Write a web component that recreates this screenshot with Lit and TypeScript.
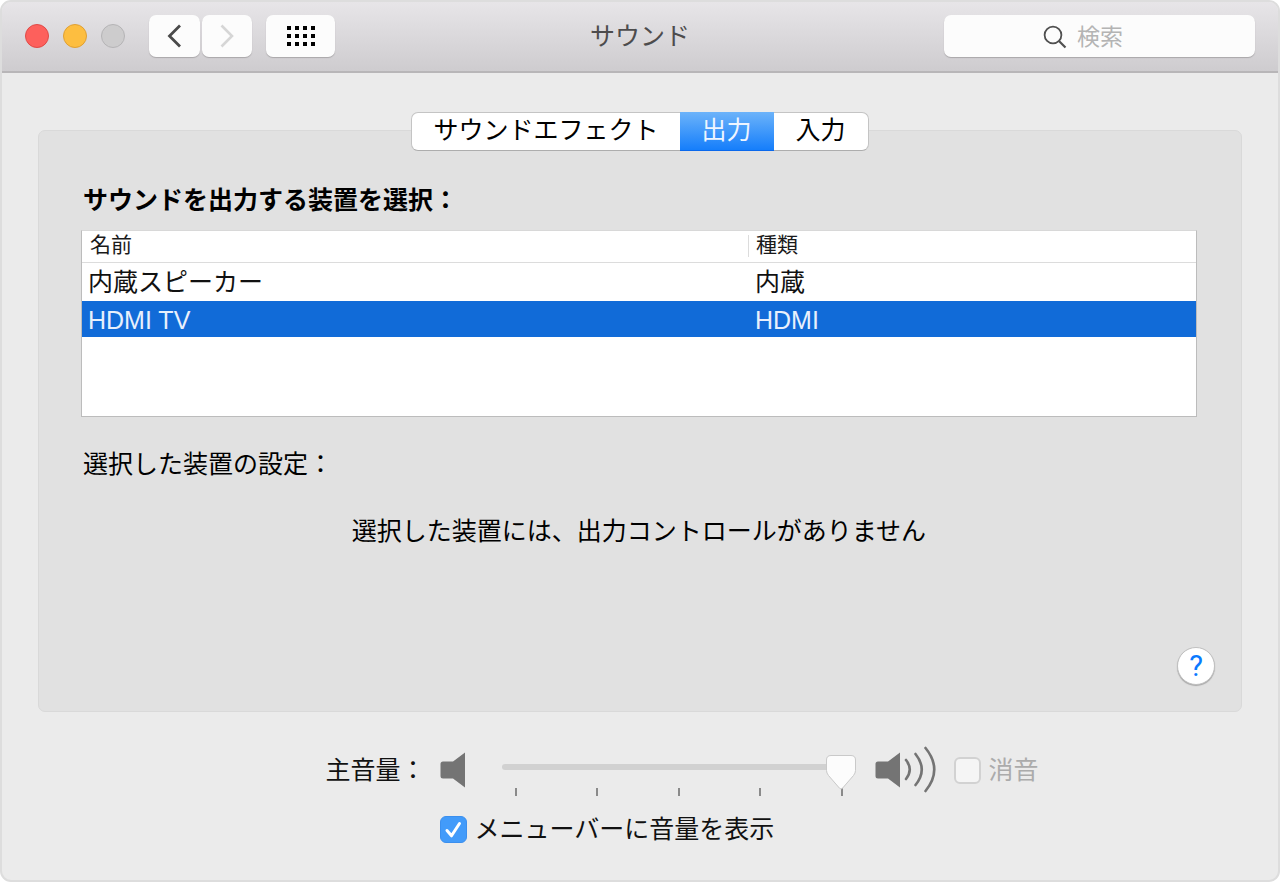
import { LitElement, html, css, svg } from "lit";
import { customElement, property, state } from "lit/decorators.js";
import { classMap } from "lit/directives/class-map.js";

const base = css`
  * {
    box-sizing: border-box;
  }
  button,
  input {
    font: inherit;
    color: inherit;
    margin: 0;
    padding: 0;
    border: 0;
    background: none;
  }
  svg {
    display: block;
    flex: none;
  }
`;

@customElement("window-toolbar")
class WindowToolbar extends LitElement {
  @property() heading = "";

  static styles = [
    base,
    css`
      :host {
        display: grid;
        grid-template-columns: 1fr auto 1fr;
        align-items: center;
        padding: 13px 23px 14px;
        border-bottom: 2px solid #b8b6b8;
        background: linear-gradient(#e7e5e8, #cecccf);
      }
      .left {
        display: flex;
        align-items: center;
      }
      .lights {
        display: flex;
        gap: 14px;
        margin-right: 24px;
      }
      .light {
        width: 24px;
        height: 24px;
        border-radius: 50%;
        border: 1px solid #b5b4b6;
        background: #cdcccd;
      }
      .close {
        background: #fd605c;
        border-color: #df4a47;
      }
      .minimize {
        background: #fdbe40;
        border-color: #dfa034;
      }
      .nav {
        display: flex;
        gap: 2px;
        margin-right: 14px;
      }
      .tool {
        display: flex;
        align-items: center;
        justify-content: center;
        width: 50px;
        height: 42px;
        border-radius: 7px;
        background: #fcfcfc;
        box-shadow: 0 1px 1px #a9a7a9;
      }
      .back {
        width: 51px;
      }
      .all {
        width: 69px;
      }
      .title {
        margin: 0;
        font-size: 25px;
        line-height: 36px;
        font-weight: 400;
        color: #4d4c4d;
      }
      .search {
        justify-self: end;
        display: flex;
        align-items: center;
        gap: 10px;
        width: 311px;
        height: 42px;
        padding: 2px 0 0 99px;
        border-radius: 7px;
        background: #fcfcfc;
        box-shadow: 0 1px 1px #a9a7a9;
      }
      .field {
        flex: 1;
        min-width: 0;
        height: 40px;
        font-size: 23px;
        color: #222;
        outline: none;
      }
      .field::placeholder {
        color: #b4b4b4;
        opacity: 1;
      }
    `,
  ];

  render() {
    const dots = [0, 1, 2].flatMap((r) =>
      [0, 1, 2, 3].map((c) => svg`<rect x=${c * 8} y=${r * 8} width="4" height="4"></rect>`)
    );
    return html`
      <div class="left">
        <div class="lights">
          <button class="light close" aria-label="閉じる"></button>
          <button class="light minimize" aria-label="しまう"></button>
          <button class="light" aria-label="拡大" disabled></button>
        </div>
        <div class="nav">
          <button class="tool back" aria-label="戻る">
            <svg width="16" height="24" viewBox="0 0 16 24" fill="none" stroke="#4a4a4a" stroke-width="2.8">
              <path d="M13 1.5 L2.500 12 L13 22.5"></path>
            </svg>
          </button>
          <button class="tool" aria-label="進む" disabled>
            <svg width="16" height="24" viewBox="0 0 16 24" fill="none" stroke="#d6d6d6" stroke-width="2.600">
              <path d="M2.5 1.5 L13 12 L2.5 22.5"></path>
            </svg>
          </button>
        </div>
        <button class="tool all" aria-label="すべてを表示">
          <svg width="28" height="20" viewBox="0 0 28 20" fill="#000">${dots}</svg>
        </button>
      </div>
      <h1 class="title">${this.heading}</h1>
      <label class="search">
        <svg width="24" height="24" viewBox="0 0 24 24" fill="none" stroke="#505050" stroke-width="1.8">
          <circle cx="10" cy="10" r="8.4"></circle>
          <path d="M16 16 L22.5 22.5" stroke-width="2.2"></path>
        </svg>
        <input class="field" type="text" placeholder="検索" aria-label="検索" />
      </label>
    `;
  }
}

interface Device {
  name: string;
  kind: string;
}

@customElement("device-table")
class DeviceTable extends LitElement {
  @property({ attribute: false }) devices: Device[] = [];
  @state() selected = 1;

  static styles = [
    base,
    css`
      :host {
        display: block;
        min-height: 187px;
        background: #fff;
        border: 1px solid #bcbcbc;
        border-top-color: #d8d8d8;
      }
      table {
        width: 100%;
        table-layout: fixed;
        border-spacing: 0;
      }
      .kind {
        width: 448px;
      }
      th,
      td {
        text-align: left;
        font-weight: 400;
        white-space: nowrap;
      }
      th {
        height: 32px;
        padding: 0 8px 3px;
        font-size: 21px;
        line-height: 28px;
        color: #1a1a1a;
        border-bottom: 1px solid #dcdcdc;
      }
      .divided {
        background: linear-gradient(#dcdcdc, #dcdcdc) 0 4px / 1px 22px no-repeat;
      }
      td {
        height: 38px;
        padding: 0 6px;
        font-size: 25px;
        line-height: 34px;
        color: #111;
      }
      td.second {
        padding-left: 7px;
      }
      .selected td {
        height: 36px;
        padding-top: 2px;
        background: #116bd8;
        color: #e8f0fc;
      }
    `,
  ];

  render() {
    return html`
      <table>
        <colgroup>
          <col />
          <col class="kind" />
        </colgroup>
        <thead>
          <tr>
            <th scope="col">名前</th>
            <th scope="col" class="divided">種類</th>
          </tr>
        </thead>
        <tbody>
          ${this.devices.map(
            (d, i) => html`<tr
              class=${classMap({ selected: i === this.selected })}
              @click=${() => (this.selected = i)}
            >
              <td>${d.name}</td>
              <td class="second">${d.kind}</td>
            </tr>`
          )}
        </tbody>
      </table>
    `;
  }
}

@customElement("volume-controls")
class VolumeControls extends LitElement {
  static styles = [
    base,
    css`
      :host {
        display: grid;
        grid-template-columns: auto auto;
        justify-content: center;
        column-gap: 14px;
        row-gap: 15px;
        padding-left: 84px;
        font-size: 25px;
        line-height: 36px;
        color: #111;
        white-space: nowrap;
      }
      .row {
        display: flex;
        align-items: center;
      }
      .caption {
        align-self: center;
      }
      .low {
        margin-right: 36px;
      }
      .high {
        margin: 0 17px 0 19px;
      }
      .slider {
        display: grid;
        width: 354px;
        height: 52px;
        padding-top: 5px;
      }
      .range {
        grid-area: 1 / 1;
        appearance: none;
        width: 100%;
        height: 36px;
        z-index: 1;
      }
      .range::-webkit-slider-runnable-track {
        height: 6px;
        border-radius: 3px;
        background: #d1d1d1;
      }
      .range::-webkit-slider-thumb {
        appearance: none;
        width: 30px;
        height: 36px;
        margin-top: -9px;
        background: url("data:image/svg+xml,%3Csvg xmlns='http://www.w3.org/2000/svg' width='30' height='36'%3E%3Cpath d='M5 .5H25Q29.5 .5 29.5 5V15.500Q29.500 18 27.500 20.500L16.500 33.200Q15 34.800 13.500 33.200L2.500 20.500Q.5 18 .5 15.500V5Q.5 .5 5 .5Z' fill='%23fcfcfc' stroke='%23c9c9c9'/%3E%3C/svg%3E");
      }
      .ticks {
        grid-area: 1 / 1;
        align-self: end;
        display: flex;
        justify-content: space-between;
        padding: 0 13px;
      }
      .tick {
        width: 2px;
        height: 8px;
        background: #8a8a8a;
      }
      .check {
        display: flex;
        align-items: center;
        gap: 8px;
      }
      .box {
        appearance: none;
        width: 27px;
        height: 27px;
        border: 2px solid #d2d2d2;
        border-radius: 6px;
        background: #f5f5f5;
      }
      .box:checked {
        border: 1px solid #3b8fee;
        background: #429bfa
          url("data:image/svg+xml,%3Csvg xmlns='http://www.w3.org/2000/svg' width='25' height='25' fill='none' stroke='white' stroke-width='3' stroke-linecap='round' stroke-linejoin='round'%3E%3Cpath d='M6 13.500L10.500 18.800L18.500 6.500'/%3E%3C/svg%3E")
          center no-repeat;
      }
      .muted {
        color: #ababab;
      }
      .menubar {
        grid-column: 2;
      }
    `,
  ];

  speaker() {
    return svg`<path d="M3 9.500 H13 L25 0.500 V35.500 L13 26.500 H3 Q0.500 26.500 0.500 24 V12 Q0.500 9.500 3 9.500 Z" fill="#747474"></path>`;
  }

  render() {
    return html`
      <label class="caption" for="volume">主音量：</label>
      <div class="row">
        <svg class="low" width="26" height="36" viewBox="0 0 26 36">${this.speaker()}</svg>
        <div class="slider">
          <input id="volume" class="range" type="range" min="0" max="4" step="any" value="4" />
          <div class="ticks">${[0, 1, 2, 3, 4].map(() => html`<span class="tick"></span>`)}</div>
        </div>
        <svg class="high" width="62" height="48" viewBox="0 0 62 48">
          <g transform="translate(0 6)">${this.speaker()}</g>
          <g fill="none" stroke="#747474" stroke-width="2.600" stroke-linecap="round">
            <path d="M31 14 Q38.500 23.500 31 33"></path>
            <path d="M40.500 8 Q53 23.500 40.500 39"></path>
            <path d="M50.500 2 Q68 23.500 50.500 45"></path>
          </g>
        </svg>
        <label class="check muted"><input class="box" type="checkbox" disabled />消音</label>
      </div>
      <label class="check menubar"><input class="box" type="checkbox" checked />メニューバーに音量を表示</label>
    `;
  }
}

@customElement("app-root")
class AppRoot extends LitElement {
  @state() tab = 1;

  static styles = [
    base,
    css`
      :host {
        display: flex;
        flex-direction: column;
        min-height: 100vh;
        box-sizing: border-box;
        border: 2px solid #dddddd;
        border-radius: 11px;
        background: #ebebeb;
        overflow: hidden;
        font-family: "Liberation Sans", "Noto Sans CJK JP", sans-serif;
        font-size: 25px;
        line-height: 36px;
        color: #000;
      }
      .main {
        display: flex;
        flex-direction: column;
        padding: 39px 36px 31px;
      }
      .tabs {
        align-self: center;
        display: flex;
        height: 39px;
        border: 1px solid #c4c4c4;
        border-bottom-color: #adadad;
        border-radius: 7px;
        background: #fff;
        z-index: 1;
      }
      .tab {
        min-width: 94px;
        padding: 0 21px 3px;
        line-height: 34px;
      }
      .tab.on {
        margin: -1px 0;
        color: #eef5ff;
        background: linear-gradient(#6cb3fa, #157efb);
        border-bottom: 1px solid #0a68ec;
      }
      .panel {
        display: flex;
        flex-direction: column;
        margin: -21px 0 32px;
        padding: 51px 44px 26px 42px;
        border: 1px solid #d9d9d9;
        border-radius: 7px;
        background: #e1e1e1;
      }
      .heading {
        margin: 0 0 12px;
        font-size: 25px;
        font-weight: 700;
      }
      .heading,
      .settings {
        padding-left: 2px;
      }
      .settings {
        margin: 29px 0 31px;
      }
      .message {
        margin: 0;
        text-align: center;
      }
      .help {
        align-self: flex-end;
        width: 38px;
        height: 38px;
        margin: 98px -18px 0 0;
        border-radius: 50%;
        background: #fff;
        border: 1px solid #c0c0c0;
        box-shadow: 0 1px 1px #a8a8a8;
        color: #0a7aff;
        font-family: Roboto, sans-serif;
        font-weight: 400;
        font-size: 29px;
        line-height: 36px;
      }
    `,
  ];

  private devices: Device[] = [
    { name: "内蔵スピーカー", kind: "内蔵" },
    { name: "HDMI TV", kind: "HDMI" },
  ];

  render() {
    const tabs = ["サウンドエフェクト", "出力", "入力"];
    return html`
      <window-toolbar heading="サウンド"></window-toolbar>
      <div class="main">
        <div class="tabs" role="tablist">
          ${tabs.map(
            (t, i) => html`<button
              class=${classMap({ tab: true, on: i === this.tab })}
              role="tab"
              aria-selected=${i === this.tab ? "true" : "false"}
              @click=${() => (this.tab = i)}
            >
              ${t}
            </button>`
          )}
        </div>
        <section class="panel">
          <h2 class="heading">サウンドを出力する装置を選択：</h2>
          <device-table .devices=${this.devices}></device-table>
          <div class="settings">選択した装置の設定：</div>
          <p class="message">選択した装置には、出力コントロールがありません</p>
          <button class="help" aria-label="ヘルプ">?</button>
        </section>
        <volume-controls></volume-controls>
      </div>
    `;
  }
}
